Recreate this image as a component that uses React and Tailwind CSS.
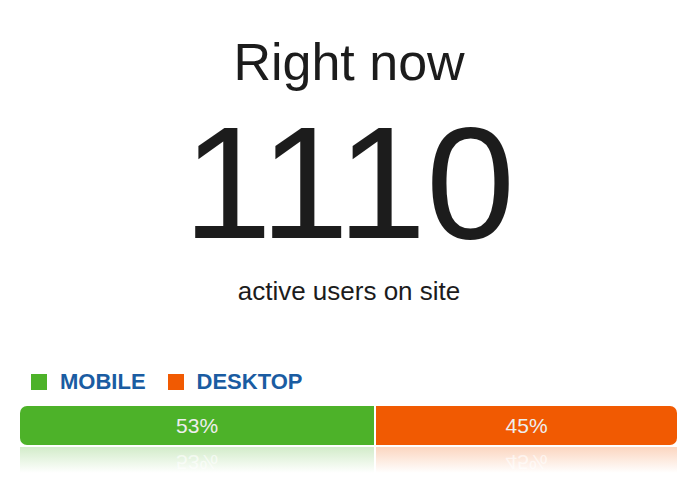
const segments = [
  { key: "mobile", label: "MOBILE", pct: 53, color: "bg-[#4db229]", fade: "from-[#4db229]/25" },
  { key: "desktop", label: "DESKTOP", pct: 45, color: "bg-[#f15a02]", fade: "from-[#f15a02]/25" },
];

const App = () => {
  return (
    <div
      className="w-[698px] h-[500px] bg-white overflow-hidden flex flex-col"
      style={{ fontFamily: '"Liberation Sans", Arial, sans-serif' }}
    >
      {/* Headline */}
      <div className="flex flex-col items-center pt-[36px] text-[#1c1c1c]">
        <h1 className="text-[52px] leading-none">Right now</h1>
        <div className="mt-[15px] text-[160px] leading-none">1110</div>
        <p className="mt-[15px] text-[26px] leading-none">active users on site</p>
      </div>

      {/* Legend */}
      <div className="mt-[67px] flex items-center pl-[31px] gap-[22px]">
        {segments.map((s) => (
          <div key={s.key} className="flex items-center gap-[13px]">
            <span className={`w-[16px] h-[16px] ${s.color}`} />
            <span className="text-[22px] leading-none font-bold text-[#1a5ca2]">{s.label}</span>
          </div>
        ))}
      </div>

      {/* Bar */}
      <div className="mt-[13px] mx-[20px] w-[657px]">
        <div className="flex h-[39px] gap-[2px] rounded-[7px] overflow-hidden">
          {segments.map((s) => (
            <div
              key={s.key}
              className={`${s.color} flex items-center justify-center text-[21px] text-[#eeeeee]`}
              style={{ flex: s.pct }}
            >
              {s.pct}%
            </div>
          ))}
        </div>

        {/* Reflection */}
        <div className="flex h-[26px] gap-[2px] mt-[2px] overflow-hidden">
          {segments.map((s) => (
            <div
              key={s.key}
              className={`bg-gradient-to-b ${s.fade} to-white/0 flex justify-center`}
              style={{ flex: s.pct }}
            >
              <span className="text-[21px] leading-none text-white -scale-y-100 mt-[-6px] opacity-60">
                {s.pct}%
              </span>
            </div>
          ))}
        </div>
      </div>
    </div>
  );
};

export default App;
